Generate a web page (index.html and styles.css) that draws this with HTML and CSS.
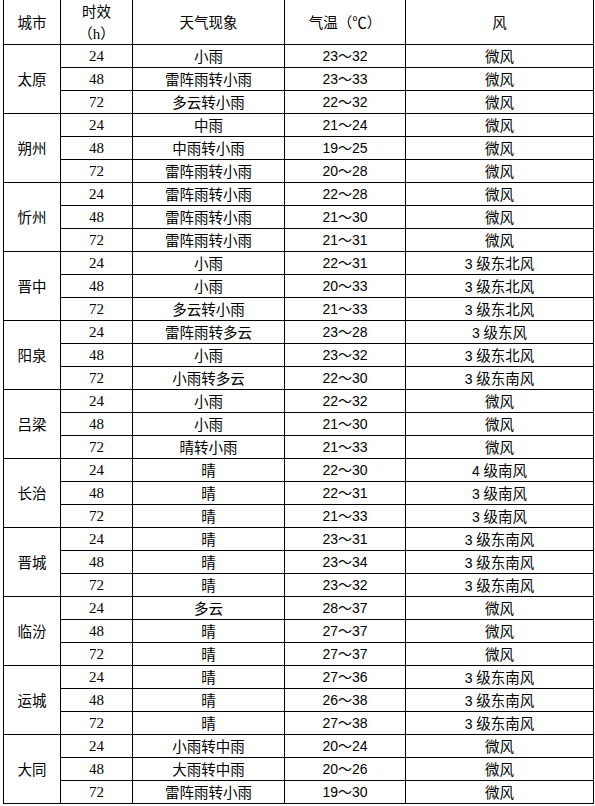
FILE: index.html
```html
<!DOCTYPE html>
<html lang="zh">
<head>
<meta charset="utf-8">
<link rel="stylesheet" href="styles.css">
</head>
<body>
<table class="fc">
<colgroup><col class="c1"><col class="c2"><col class="c3"><col class="c4"><col class="c5"></colgroup>
<thead>
<tr class="head"><th>城市</th><th><div class="two"><span>时效</span><span>（<span class="lat">h</span>）</span></div></th><th>天气现象</th><th>气温（℃）</th><th>风</th></tr>
</thead>
<tbody>
<tr><td rowspan="3" class="city">太原</td><td class="t">24</td><td>小雨</td><td class="n">23～32</td><td>微风</td></tr>
<tr><td class="t">48</td><td>雷阵雨转小雨</td><td class="n">23～33</td><td>微风</td></tr>
<tr><td class="t">72</td><td>多云转小雨</td><td class="n">22～32</td><td>微风</td></tr>

<tr><td rowspan="3" class="city">朔州</td><td class="t">24</td><td>中雨</td><td class="n">21～24</td><td>微风</td></tr>
<tr><td class="t">48</td><td>中雨转小雨</td><td class="n">19～25</td><td>微风</td></tr>
<tr><td class="t">72</td><td>雷阵雨转小雨</td><td class="n">20～28</td><td>微风</td></tr>

<tr><td rowspan="3" class="city">忻州</td><td class="t">24</td><td>雷阵雨转小雨</td><td class="n">22～28</td><td>微风</td></tr>
<tr><td class="t">48</td><td>雷阵雨转小雨</td><td class="n">21～30</td><td>微风</td></tr>
<tr><td class="t">72</td><td>雷阵雨转小雨</td><td class="n">21～31</td><td>微风</td></tr>

<tr><td rowspan="3" class="city">晋中</td><td class="t">24</td><td>小雨</td><td class="n">22～31</td><td><span class="n">3 </span>级东北风</td></tr>
<tr><td class="t">48</td><td>小雨</td><td class="n">20～33</td><td><span class="n">3 </span>级东北风</td></tr>
<tr><td class="t">72</td><td>多云转小雨</td><td class="n">21～33</td><td><span class="n">3 </span>级东北风</td></tr>

<tr><td rowspan="3" class="city">阳泉</td><td class="t">24</td><td>雷阵雨转多云</td><td class="n">23～28</td><td><span class="n">3 </span>级东风</td></tr>
<tr><td class="t">48</td><td>小雨</td><td class="n">23～32</td><td><span class="n">3 </span>级东北风</td></tr>
<tr><td class="t">72</td><td>小雨转多云</td><td class="n">22～30</td><td><span class="n">3 </span>级东南风</td></tr>

<tr><td rowspan="3" class="city">吕梁</td><td class="t">24</td><td>小雨</td><td class="n">22～32</td><td>微风</td></tr>
<tr><td class="t">48</td><td>小雨</td><td class="n">21～30</td><td>微风</td></tr>
<tr><td class="t">72</td><td>晴转小雨</td><td class="n">21～33</td><td>微风</td></tr>

<tr><td rowspan="3" class="city">长治</td><td class="t">24</td><td>晴</td><td class="n">22～30</td><td><span class="n">4 </span>级南风</td></tr>
<tr><td class="t">48</td><td>晴</td><td class="n">22～31</td><td><span class="n">3 </span>级南风</td></tr>
<tr><td class="t">72</td><td>晴</td><td class="n">21～33</td><td><span class="n">3 </span>级南风</td></tr>

<tr><td rowspan="3" class="city">晋城</td><td class="t">24</td><td>晴</td><td class="n">23～31</td><td><span class="n">3 </span>级东南风</td></tr>
<tr><td class="t">48</td><td>晴</td><td class="n">23～34</td><td><span class="n">3 </span>级东南风</td></tr>
<tr><td class="t">72</td><td>晴</td><td class="n">23～32</td><td><span class="n">3 </span>级东南风</td></tr>

<tr><td rowspan="3" class="city">临汾</td><td class="t">24</td><td>多云</td><td class="n">28～37</td><td>微风</td></tr>
<tr><td class="t">48</td><td>晴</td><td class="n">27～37</td><td>微风</td></tr>
<tr><td class="t">72</td><td>晴</td><td class="n">27～37</td><td>微风</td></tr>

<tr><td rowspan="3" class="city">运城</td><td class="t">24</td><td>晴</td><td class="n">27～36</td><td><span class="n">3 </span>级东南风</td></tr>
<tr><td class="t">48</td><td>晴</td><td class="n">26～38</td><td><span class="n">3 </span>级东南风</td></tr>
<tr><td class="t">72</td><td>晴</td><td class="n">27～38</td><td><span class="n">3 </span>级东南风</td></tr>

<tr><td rowspan="3" class="city">大同</td><td class="t">24</td><td>小雨转中雨</td><td class="n">20～24</td><td>微风</td></tr>
<tr><td class="t">48</td><td>大雨转中雨</td><td class="n">20～26</td><td>微风</td></tr>
<tr><td class="t">72</td><td>雷阵雨转小雨</td><td class="n">19～30</td><td>微风</td></tr>
</tbody>
</table>
</body>
</html>
```
FILE: styles.css
```css
html, body {
  margin: 0;
  padding: 0;
  background: #fff;
}
body {
  font-family: "Noto Sans CJK SC", sans-serif;
  font-size: 14.5px;
  color: #000;
}
.fc {
  border-collapse: collapse;
  table-layout: fixed;
  width: 590px;
  margin: -1px 0 0 3px;
}
.c1 { width: 57px; }
.c2 { width: 72px; }
.c3 { width: 152px; }
.c4 { width: 121px; }
.c5 { width: 188px; }
.fc th, .fc td {
  border: 1px solid #000;
  padding: 0;
  text-align: center;
  vertical-align: middle;
  font-weight: normal;
  white-space: nowrap;
  line-height: 16px;
}
.fc td {
  height: 22px;
}
.fc th {
  height: 44px;
}
.two {
  display: flex;
  flex-direction: column;
  align-items: center;
  gap: 6px;
}
.fc td.t, .lat {
  font-family: "Liberation Serif", "Noto Sans CJK SC", serif;
  font-size: 15px;
}
.n {
  font-family: "Liberation Sans", "Noto Sans CJK SC", sans-serif;
  font-size: 14px;
}
```
